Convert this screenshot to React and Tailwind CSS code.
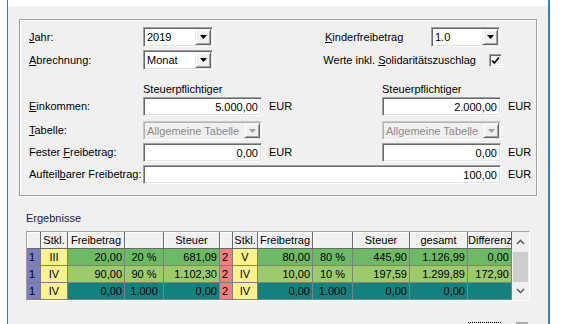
import React from 'react';

const SUNKEN =
  'border border-t-[#a0a0a0] border-l-[#a0a0a0] border-r-white border-b-white shadow-[inset_1px_1px_0_#696969,inset_-1px_-1px_0_#e3e3e3]';
const SUNKEN_OFF =
  'border border-t-[#c8c8c8] border-l-[#c8c8c8] border-r-white border-b-white shadow-[inset_1px_1px_0_#b4b4b4,inset_-1px_-1px_0_#e9e9e9]';
const RAISED =
  'border border-t-[#f0f0f0] border-l-[#f0f0f0] border-r-[#696969] border-b-[#696969] shadow-[inset_1px_1px_0_#fff,inset_-1px_-1px_0_#a0a0a0]';

const Arrow = ({ color = '#000' }) => (
  <svg width="7" height="4" viewBox="0 0 7 4">
    <polygon points="0,0 7,0 3.5,4" fill={color} />
  </svg>
);

const Combo = ({ value, className = '', disabled = false }) => (
  <div
    className={`flex p-[1px] ${disabled ? SUNKEN_OFF + ' bg-[#f0f0f0] text-[#8a8a8a]' : SUNKEN + ' bg-white'} ${className}`}
  >
    <div className="flex-1 overflow-hidden whitespace-nowrap pl-[2px] leading-[16px]">{value}</div>
    <div className={`flex w-[16px] items-center justify-center bg-[#f0f0f0] ${RAISED}`}>
      <Arrow color={disabled ? '#a0a0a0' : '#000'} />
    </div>
  </div>
);

const Field = ({ value, className = '' }) => (
  <div className={`h-[19px] bg-white pr-[3px] text-right leading-[18px] ${SUNKEN} ${className}`}>{value}</div>
);

const Label = ({ children }) => <div className="w-[114px] whitespace-nowrap">{children}</div>;

const Eur = () => <div className="w-[120px] pl-[7px]">EUR</div>;

const cols = ['w-[14px]', 'w-[27px]', 'w-[57px]', 'w-[39px]', 'w-[56px]', 'w-[13px]', 'w-[25px]', 'w-[55px]', 'w-[40px]', 'w-[57px]', 'w-[58px]', 'w-[44px]'];

const headers = ['', 'Stkl.', 'Freibetrag', '', 'Steuer', '', 'Stkl.', 'Freibetrag', '', 'Steuer', 'gesamt', 'Differenz'];

const rows = [
  { fill: 'bg-[#6cbb64]', cells: ['1', 'III', '20,00', '20 %', '681,09', '2', 'V', '80,00', '80 %', '445,90', '1.126,99', '0,00'] },
  { fill: 'bg-[#9dca6b]', cells: ['1', 'IV', '90,00', '90 %', '1.102,30', '2', 'IV', '10,00', '10 %', '197,59', '1.299,89', '172,90'] },
  { fill: 'bg-[#128280]', cells: ['1', 'IV', '0,00', '1.000', '0,00', '2', 'IV', '0,00', '1.000', '0,00', '0,00', ''] },
];

const cellFill = (i, fill) => {
  if (i === 0) return 'bg-[#7b7fc2] pl-[2px]';
  if (i === 5) return 'bg-[#f27f7f] pl-[2px]';
  if (i === 1 || i === 6) return 'bg-[#faf28c] text-center';
  if (i === 3 || i === 8) return `${fill} text-center`;
  return `${fill} text-right pr-[2px]`;
};

const ResultGrid = () => (
  <div className="ml-[18px] mt-[6px] flex w-[504px] border border-t-[#a0a0a0] border-l-[#a0a0a0] border-r-white border-b-white">
    <div className="w-[485px]">
      <div className="flex h-[17px]">
        {headers.map((h, i) => (
          <div
            key={i}
            className={`${cols[i]} overflow-hidden whitespace-nowrap border-b border-r border-[#696969] bg-[#f0f0f0] text-center leading-[16px] shadow-[inset_1px_1px_0_#fff]`}
          >
            {h}
          </div>
        ))}
      </div>
      {rows.map((r, ri) => (
        <div key={ri} className="flex h-[17px]">
          {r.cells.map((c, i) => (
            <div
              key={i}
              className={`${cols[i]} overflow-hidden whitespace-nowrap border-b border-r border-[#808080] leading-[16px] ${cellFill(i, r.fill)}`}
            >
              {c}
            </div>
          ))}
        </div>
      ))}
    </div>
    {/* scrollbar */}
    <div className="flex w-[17px] flex-col items-center bg-[#f0f0f0]">
      <div className="flex h-[20px] items-center justify-center">
        <svg width="9" height="6" viewBox="0 0 9 6">
          <polyline points="1,5 4.5,1.5 8,5" fill="none" stroke="#606060" strokeWidth="1.6" />
        </svg>
      </div>
      <div className="h-[30px] w-[15px] bg-[#cdcdcd]" />
      <div className="flex h-[18px] items-center justify-center">
        <svg width="9" height="6" viewBox="0 0 9 6">
          <polyline points="1,1 4.5,4.5 8,1" fill="none" stroke="#606060" strokeWidth="1.6" />
        </svg>
      </div>
    </div>
  </div>
);

export default function App() {
  return (
    <div className="flex h-[324px] w-[580px] overflow-hidden bg-white font-['Liberation_Sans',Arial,sans-serif] text-[11px] text-black">
      <div className="w-[7px]" />
      <div className="w-[1px] bg-[#2f7fd0]" />
      <div className="mt-[6px] w-[540px] bg-[#f0f0f0]">
        {/* Eingaben */}
        <div className="ml-[11px] mt-[13px] h-[177px] w-[518px] border border-[#a0a0a0] pl-[9px] pt-[7px] shadow-[inset_1px_1px_0_#fff,1px_1px_0_#fff]">
          <div className="flex h-[20px] items-center">
            <Label>
              <u>J</u>ahr:
            </Label>
            <Combo value="2019" className="h-[20px] w-[70px]" />
            <div className="w-[112px]" />
            <div className="w-[106px]">
              <u>K</u>inderfreibetrag
            </div>
            <Combo value="1.0" className="h-[20px] w-[69px]" />
          </div>
          <div className="mt-[3px] flex h-[20px] items-center">
            <Label>
              <u>A</u>brechnung:
            </Label>
            <Combo value="Monat" className="h-[20px] w-[70px]" />
            <div className="w-[276px] whitespace-nowrap pr-[13px] text-right">
              Werte inkl. <u>S</u>olidaritätszuschlag
            </div>
            <div className={`flex h-[13px] w-[13px] items-center justify-center bg-white ${SUNKEN}`}>
              <svg width="9" height="9" viewBox="0 0 9 9">
                <polyline points="1,4.5 3.3,7 8,1.5" fill="none" stroke="#000" strokeWidth="1.6" />
              </svg>
            </div>
          </div>
          <div className="mt-[12px] flex h-[14px] leading-[14px]">
            <div className="w-[114px]" />
            <div className="w-[239px]">Steuerpflichtiger</div>
            <div>Steuerpflichtiger</div>
          </div>
          <div className="mt-[1px] flex h-[19px] items-center">
            <Label>
              <u>E</u>inkommen:
            </Label>
            <Field value="5.000,00" className="w-[119px]" />
            <Eur />
            <Field value="2.000,00" className="w-[119px]" />
            <div className="pl-[7px]">EUR</div>
          </div>
          <div className="mt-[5px] flex h-[19px] items-center">
            <Label>
              <u>T</u>abelle:
            </Label>
            <Combo value="Allgemeine Tabelle" disabled className="h-[19px] w-[119px]" />
            <div className="w-[120px]" />
            <Combo value="Allgemeine Tabelle" disabled className="h-[19px] w-[119px]" />
          </div>
          <div className="mt-[3px] flex h-[19px] items-center">
            <Label>
              Fester <u>F</u>reibetrag:
            </Label>
            <Field value="0,00" className="w-[119px]" />
            <Eur />
            <Field value="0,00" className="w-[119px]" />
            <div className="pl-[7px]">EUR</div>
          </div>
          <div className="mt-[3px] flex h-[19px] items-center">
            <Label>
              Aufteil<u>b</u>arer Freibetrag:
            </Label>
            <Field value="100,00" className="w-[358px]" />
            <div className="pl-[7px]">EUR</div>
          </div>
        </div>

        {/* Ergebnisse */}
        <div className="ml-[18px] mt-[15px] h-[14px] leading-[14px] text-[#1a2238]">Ergebnisse</div>
        <ResultGrid />

        <div className="mt-[21px] flex h-[2px]">
          <div className="ml-[460px] w-[33px] border-t border-dotted border-black" />
          <div className="ml-[15px] h-[2px] w-[12px] bg-[#adadad]" />
        </div>
      </div>
      <div className="w-[2px] bg-[#2f7fd0]" />
    </div>
  );
}
